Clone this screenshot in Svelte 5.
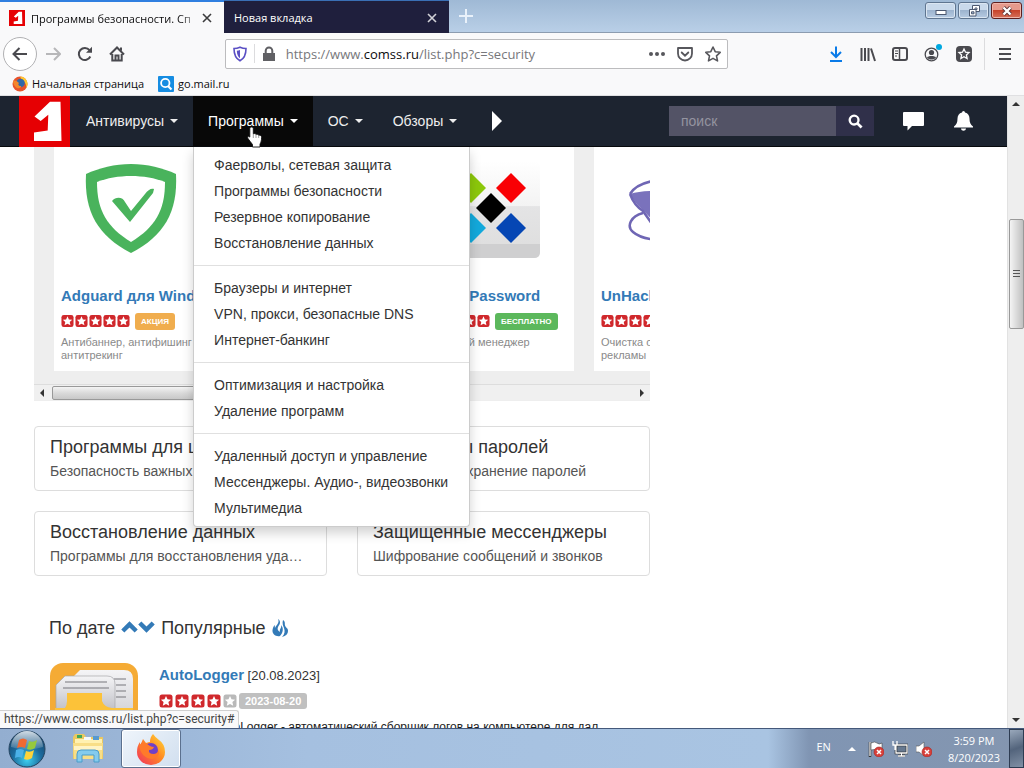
<script>
  const nav = ['Антивирусы', 'Программы', 'ОС', 'Обзоры'];
  const menu = [
    ['Фаерволы, сетевая защита', 'Программы безопасности', 'Резервное копирование', 'Восстановление данных'],
    ['Браузеры и интернет', 'VPN, прокси, безопасные DNS', 'Интернет-банкинг'],
    ['Оптимизация и настройка', 'Удаление программ'],
    ['Удаленный доступ и управление', 'Мессенджеры. Аудио-, видеозвонки', 'Мультимедиа']
  ];
  const cards = [
    { title: 'Adguard для Wind...', badge: 'АКЦИЯ', tone: 'promo', text: 'Антибаннер, антифишинг и антитрекинг', logo: 'shield' },
    { title: '' },
    { title: 'Sticky Password', badge: 'БЕСПЛАТНО', tone: 'free', text: 'Надежный менеджер', logo: 'sticky' },
    { title: 'UnHackMe', badge: '', tone: '', text: 'Очистка от вирусов и рекламы', logo: 'unhack' }
  ];
  const groups = [
    ['Программы для школы', 'Безопасность важных данных'],
    ['Менеджеры паролей', 'Управление и хранение паролей'],
    ['Восстановление данных', 'Программы для восстановления удаленных файлов'],
    ['Защищенные мессенджеры', 'Шифрование сообщений и звонков']
  ];
</script>

{#snippet star(on)}
  <svg class="star" viewBox="0 0 14 14" aria-hidden="true">
    <rect x="0.5" y="0.5" width="13" height="13" rx="2.5" fill={on ? '#d0282c' : '#b9b9b9'} />
    <path d="M7 2l1.5 3.300 3.600.4-2.700 2.400.8 3.600L7 9.900l-3.200 1.800.8-3.600-2.700-2.400 3.600-.4z" fill="#fff" />
  </svg>
{/snippet}

{#snippet brand()}
  <svg viewBox="0 0 51 51" aria-hidden="true">
    <rect width="51" height="51" fill="#e60003" />
    <path d="M31 5.700H41.500L42.500 45H15V36.500L28.700 34.500L29.300 18.700L21.700 25L15.500 20.500Z" fill="#fff" />
  </svg>
{/snippet}

{#snippet redX()}
  <circle cx="11" cy="11" r="5" fill="#d8403a" stroke="#a62420" stroke-width=".6" />
  <path d="M9 9l4 4M13 9l-4 4" stroke="#fff" stroke-width="1.5" />
{/snippet}

<div class="desktop">
  <header class="titlebar">
    <div class="tab active">
      <span class="favicon">{@render brand()}</span>
      <span class="tabname fade">Программы безопасности. Сп</span>
      <button class="close" aria-label="Закрыть вкладку"><svg viewBox="0 0 10 10"><path d="M1 1l8 8M9 1L1 9" /></svg></button>
    </div>
    <div class="tab">
      <span class="tabname">Новая вкладка</span>
      <button class="close" aria-label="Закрыть вкладку"><svg viewBox="0 0 10 10"><path d="M1 1l8 8M9 1L1 9" /></svg></button>
    </div>
    <button class="newtab" aria-label="Новая вкладка"><svg viewBox="0 0 14 14"><path d="M7 0v14M0 7h14" stroke="#e9f1fa" stroke-width="2" /></svg></button>
    <div class="winbtns">
      <button aria-label="Свернуть"><svg viewBox="0 0 16 12"><rect x="3" y="5.500" width="10" height="4" fill="#fff" stroke="#4c5870" /></svg></button>
      <button aria-label="Восстановить"><svg viewBox="0 0 16 12"><path d="M6.500 .5h7v6h-7zM9 3h2v1.500H9z" fill="#fff" stroke="#4c5870" /><path d="M3.500 4.500h6.500v6.500H3.500z" fill="#fff" stroke="#4c5870" /><path d="M5.500 6.800h2.500v2H5.500z" fill="#a9bdd4" stroke="#4c5870" /></svg></button>
      <button class="quit" aria-label="Закрыть"><svg viewBox="0 0 16 12"><path d="M4.500 2.500l7 7M11.500 2.500l-7 7" stroke="#5c3436" stroke-width="4" /><path d="M4.500 2.500l7 7M11.500 2.500l-7 7" stroke="#fff" stroke-width="2.400" /></svg></button>
    </div>
  </header>

  <div class="toolbar">
    <button class="back" aria-label="Назад"><svg viewBox="0 0 16 16"><path d="M15 8H2M7.500 2L1.500 8l6 6" /></svg></button>
    <button class="tool dim" aria-label="Вперёд"><svg viewBox="0 0 16 16"><path d="M1 8h13M9 2l6 6-6 6" /></svg></button>
    <button class="tool" aria-label="Обновить"><svg viewBox="0 0 16 16"><path d="M13.300 10.500A6 6 0 1 1 12.500 4.200" /><path d="M15 .8v6H9z" fill="#4a4a4f" stroke="none" /></svg></button>
    <button class="tool" aria-label="Домой"><svg viewBox="0 0 16 16"><path d="M1 8.500L8 1.500l7 7M3.300 8v6.500h9.400V8M12 1.500v3" /><path d="M6.500 14.500V9.500h3v5" /></svg></button>
    <span class="spring"></span>
    <div class="urlbar">
      <svg class="ic" viewBox="0 0 16 16"><path d="M8 1.200c2 .9 4 1.300 6 1.300 0 6-1.300 9.800-6 12.300C3.300 12.300 2 8.500 2 2.500c2 0 4-.4 6-1.300z" fill="none" stroke="#5a4fc4" stroke-width="1.600" /><path d="M8 4v8.300C6 10.800 4.900 8.500 4.800 4.800 6 4.700 7 4.500 8 4z" fill="#5a4fc4" /></svg>
      <span class="bar"></span>
      <svg class="ic" viewBox="0 0 16 16"><path d="M2 7h12v8H2z" fill="#606064" /><path d="M4.700 7V4.700a3.300 3.300 0 0 1 6.600 0V7" fill="none" stroke="#606064" stroke-width="2" /></svg>
      <span class="address">https://www.<b>comss.ru</b>/list.php?c=security</span>
      <span class="actions">
        <svg class="ic" viewBox="0 0 16 16" fill="#57575c"><circle cx="2" cy="8" r="2" /><circle cx="8" cy="8" r="2" /><circle cx="14" cy="8" r="2" /></svg>
        <svg class="ic" viewBox="0 0 16 16" fill="none" stroke="#57575c" stroke-width="1.800" stroke-linecap="round"><path d="M1 2h14v5.500a7 7 0 0 1-14 0z" stroke-linejoin="round" /><path d="M4.700 6.500L8 9.700l3.300-3.200" /></svg>
        <svg class="ic" viewBox="0 0 16 16" fill="none" stroke="#57575c" stroke-width="1.600" stroke-linejoin="round"><path d="M8 1l2.200 4.700 5 .6-3.700 3.500 1 5.100L8 12.400 3.500 14.900l1-5.100L.8 6.300l5-.6z" /></svg>
      </span>
    </div>
    <span class="spring"></span>
    <button class="tool blue" aria-label="Загрузки"><svg viewBox="0 0 16 16"><path d="M8 .5v10M3 6l5 5 5-5M2 15h12" /></svg></button>
    <button class="tool" aria-label="Библиотека"><svg viewBox="0 0 16 16"><path d="M1.500 2v13M5 2v13M8.500 2v13M11 2.500L15 15" /></svg></button>
    <button class="tool" aria-label="Боковая панель"><svg viewBox="0 0 16 16"><rect x="1" y="2" width="14" height="12" rx="2" /><path d="M7.500 2v12" stroke-width="1.500" /><path d="M3 5h3M3 7.500h3M3 10h2" stroke-width="1" /></svg></button>
    <button class="tool" aria-label="Аккаунт"><svg class="account" viewBox="0 0 16 16"><circle cx="7.500" cy="8.500" r="6.300" stroke-width="1.300" /><circle cx="7.500" cy="6.500" r="2.600" fill="#4a4a4f" stroke="none" /><path d="M3 11.500c1-2 8-2 9 0-2 2.800-7 2.800-9 0z" fill="#4a4a4f" stroke="none" /><circle cx="15" cy="1" r="3" fill="#00a8e0" stroke="none" /></svg></button>
    <button class="tool" aria-label="Избранное"><svg viewBox="0 0 16 16"><rect width="16" height="16" rx="4" fill="#4a4a4f" stroke="none" /><path d="M8 3l1.500 3.200 3.500.4-2.600 2.400.7 3.500L8 10.800l-3.100 1.700.7-3.500L3 6.600l3.500-.4z" stroke="#fff" stroke-width="1.300" /></svg></button>
    <span class="bar tall"></span>
    <button class="tool menuicon" aria-label="Меню"><svg viewBox="0 0 16 16"><path d="M2 3h12M2 8h12M2 13h12" /></svg></button>
  </div>

  <nav class="bookmarks">
    <a href="#start">
      <svg class="ic" viewBox="0 0 16 16"><circle cx="8" cy="8" r="7.500" fill="#e8532b" /><path d="M8 .5a7.500 7.500 0 0 1 6 12c1-5-2-7-4-8z" fill="#ffc62e" /><circle cx="8.500" cy="7" r="4.300" fill="#3268a8" /><path d="M1 5c2-1 4 0 6 2-1 1-1 3 2 3 1 1-2 3-4 2-2-1-4-4-4-7z" fill="#f4862b" /></svg>
      Начальная страница
    </a>
    <a href="#mail">
      <svg class="ic" viewBox="0 0 16 16"><rect width="16" height="16" rx="1" fill="#168de2" /><circle cx="7.300" cy="7" r="4.200" fill="none" stroke="#fff" stroke-width="1.800" /><path d="M10 10l3.500 3.500" stroke="#fff" stroke-width="2.200" /></svg>
      go.mail.ru
    </a>
  </nav>

  <div class="viewport">
    <div class="page">
      <div class="navbar">
        <a class="brand" href="#home" aria-label="Comss">{@render brand()}</a>
        {#each nav as item, i}
          <div class="navitem" class:open={i === 1}>
            <button class="navbtn">{item}<span class="caret"></span></button>
            {#if i === 1}
              <div class="dropdown">
                {#each menu as group, g}
                  {#if g > 0}<hr />{/if}
                  {#each group as entry}<a href="#menu">{entry}</a>{/each}
                {/each}
              </div>
              <svg class="pointer" viewBox="0 0 16 22"><path d="M4.500 1c1.300 0 1.800.8 1.800 1.800v5c1-.5 2.300-.2 2.700.6 1-.4 2.200 0 2.600.9 1.500-.5 3 .3 3 1.900 0 3-.5 5-1.600 7V21H5.500v-2.500C4 16.500 2.500 14.800 1 12.500c-.8-1.300 0-2.300 1-2.100l.8.700V2.800C2.800 1.800 3.300 1 4.500 1z" fill="#fff" stroke="#111" stroke-width=".9" /><path d="M6.300 8v4M9 8.500V12M11.700 9.500V12" stroke="#777" stroke-width=".7" /></svg>
            {/if}
          </div>
        {/each}
        <button class="more" aria-label="Ещё"><svg viewBox="0 0 10 20"><path d="M0 0l10 10L0 20z" fill="#fff" /></svg></button>
        <form class="search">
          <input type="text" placeholder="поиск" aria-label="поиск" />
          <button type="button" aria-label="Найти"><svg viewBox="0 0 16 16"><circle cx="6.500" cy="6.500" r="4.700" fill="none" stroke="#fff" stroke-width="2.500" /><path d="M10 10l4.500 4.500" stroke="#fff" stroke-width="3" /></svg></button>
        </form>
        <button class="iconbtn" aria-label="Комментарии"><svg viewBox="0 0 21 20"><path d="M1 1h19a1 1 0 0 1 1 1v12a1 1 0 0 1-1 1H9l-4.500 4.500V15H1a1 1 0 0 1-1-1V2a1 1 0 0 1 1-1z" fill="#fff" /></svg></button>
        <button class="iconbtn" aria-label="Уведомления"><svg viewBox="0 0 21 20"><path d="M9 1.500a1.500 1.500 0 0 1 3 0c3 .7 4.500 3 4.500 6 0 4 1 6 3.500 8v1H1v-1c2.500-2 3.500-4 3.500-8 0-3 1.500-5.300 4.500-6zM8 17.500h5c-.3 3-4.700 3-5 0z" fill="#fff" /></svg></button>
      </div>

      <div class="layout">
        <main>
          <section class="carousel">
            <div class="strip">
              {#each cards as card}
                <article class="card">
                  {#if card.title}
                  <div class="logo">
                    {#if card.logo === 'shield'}
                      <svg viewBox="0 0 100 100"><path d="M50 5c16 0 32 4 45 10 2 38-12 62-45 79C17 77 3 53 5 15 18 9 34 5 50 5z" fill="#49b35c" /><path d="M50 17c12 0 24 2 34 6 0 29-10 45-34 60C26 68 16 52 16 23c10-4 22-6 34-6z" fill="#fff" /><path d="M31 42c4-5 11-4 13 1l6 9 14-17c3-4 6-6 9-5l-1 4L49 63z" fill="#49b35c" /></svg>
                    {:else if card.logo === 'sticky'}
                      <svg viewBox="0 0 100 100"><defs><linearGradient id="tile" x2="0" y2="1"><stop stop-color="#fff" /><stop offset=".46" stop-color="#f3f3f3" /><stop offset=".47" stop-color="#e4e4e5" /><stop offset="1" stop-color="#ddd" /></linearGradient></defs><rect x="1" y="2" width="98" height="97" rx="6" fill="url(#tile)" /><path d="M1 85h98v8q0 6-6 6H7q-6 0-6-6z" fill="#cfcfd0" /><path d="M30 14l15 15-15 15-15-15z" fill="#8cc80b" /><path d="M70 14l15 15-15 15-15-15z" fill="#f90004" /><path d="M50 34l15 15-15 15-15-15z" fill="#000" /><path d="M30 54l15 15-15 15-15-15z" fill="#13a9dc" /><path d="M70 54l15 15-15 15-15-15z" fill="#0546b4" /></svg>
                    {:else if card.logo === 'unhack'}
                      <svg viewBox="0 0 100 100" fill="none" stroke="#6f66b4" stroke-width="2.500"><path d="M9 35q10-3 25-3h36L40 70 22 51Q13 43 9 35z" fill="#7a72bc" stroke="none" /><path d="M9 35Q15 25 32 22M9 35Q13 46 22 52L36 72M22 54C10 57 5 67 12 73q8 7 26 8" /></svg>
                    {/if}
                  </div>
                  <a class="title" href="#card">{card.title}</a>
                  <div class="rating">
                    {#each [1, 2, 3, 4, 5] as n}{@render star(n > 0)}{/each}
                    {#if card.badge}<span class="badge {card.tone}">{card.badge}</span>{/if}
                  </div>
                  <p>{card.text}</p>
                  {/if}
                </article>
              {/each}
            </div>
            <div class="hscroll"><span class="arrow left"></span><span class="thumb"></span><span class="arrow right"></span></div>
          </section>

          <section class="groups">
            {#each groups as group}
              <a class="group" href="#group"><strong>{group[0]}</strong><span>{group[1]}</span></a>
            {/each}
          </section>

          <div class="sort">
            По дате
            <svg class="chev" viewBox="0 0 34 18"><path d="M1.800 12L8.500 5.500l6.700 6.500M18.800 4l6.700 6.500L32.200 4" fill="none" stroke="#337ab7" stroke-width="4.500" /></svg>
            Популярные
            <svg class="fire" viewBox="0 0 16 18"><path d="M6 0c4 3 1 6 0 8s0 4 2 5c-1-3 2-4 1-7 3 3 2 8-1 11-4 1-8-2-7.500-6C1 8 2 7 2.500 6c.5 1 .3 2 .5 3C4 6 8 4 6 0z" fill="#337ab7" /><path d="M11 1c3 2 1 4 2.500 6.500S16 9 16 12c0 3-2 5-6 6 3-3 3-6 2-9-1-2-2-5-1-8z" fill="#337ab7" /></svg>
          </div>

          <article class="entry">
            <svg class="folder" viewBox="0 0 88 88"><defs><linearGradient id="paper" x2="0" y2="1"><stop stop-color="#f4f4f6" /><stop offset="1" stop-color="#c2c2c8" /></linearGradient></defs><rect width="88" height="88" rx="13" fill="#f5ab35" /><path d="M24 13l6-6h44q9 0 9 9v58H40z" fill="url(#paper)" /><path d="M64 16h12M66 22h10M66 28h10M66 34h10" stroke="#77777d" stroke-width="1.200" /><path d="M6 22l9-9h42q8 0 8 8v25H6z" fill="url(#paper)" stroke="#a6a6ab" stroke-width=".7" /><path d="M15 19h42M13 25h46" stroke="#77777d" stroke-width="1.200" /><path d="M17 30h35v8q2 6 10 7h21v36H5V45h10q2-3 2-7z" fill="#fcc239" /></svg>
            <div class="info">
              <div class="name"><a href="#autologger">AutoLogger</a> [20.08.2023]</div>
              <div class="rating wide">
                {#each [1, 1, 1, 1, 0] as n}{@render star(n)}{/each}
                <span class="badge date">2023-08-20</span>
              </div>
              <p>Средство AutoLogger - автоматический сборщик логов на компьютере для дал</p>
            </div>
          </article>
        </main>
      </div>
    </div>
    <div class="vscroll"><span class="arrow up"></span><span class="thumb"><i></i></span><span class="arrow down"></span></div>
    <div class="status">https://www.comss.ru/list.php?c=security#</div>
  </div>

  <footer class="taskbar">
    <button class="orb" aria-label="Пуск"><svg viewBox="0 0 38 38"><defs><radialGradient id="orb" cx=".5" cy=".8" r=".8"><stop stop-color="#3dd0f0" /><stop offset=".5" stop-color="#1c6b9d" /><stop offset="1" stop-color="#173f63" /></radialGradient><linearGradient id="gloss" x2="0" y2="1"><stop stop-color="#e4eef6" stop-opacity=".9" /><stop offset="1" stop-color="#fff" stop-opacity=".1" /></linearGradient></defs><circle cx="19" cy="19" r="18" fill="url(#orb)" stroke="#25445f" /><path d="M3 17a16 16 0 0 1 32 0q-16 5-32 0z" fill="url(#gloss)" /><path d="M11 10q4-3 8 0l-2 8q-4-2-8 0z" fill="#ef6932" /><path d="M21 11q4 2 8-1l-2 8q-4 3-8 1z" fill="#95c93d" /><path d="M8 20q4-2 8 0l-2 8q-3-2-7 0z" fill="#4bb1e8" /><path d="M18 21q4 2 8-1l-2 8q-4 3-8 1z" fill="#fed33a" /></svg></button>
    <button class="task" aria-label="Проводник"><svg viewBox="0 0 34 32"><path d="M2 4l2-3h9l2 3h17v22H2z" fill="#eac862" /><path d="M4 6h27v19H4z" fill="#fff1b1" /><path d="M6 2h5v3H6z" fill="#41a85a" /><path d="M13 4h7v3h-7z" fill="#f7fafb" /><path d="M22 3h6v4h-6z" fill="#5799d0" /><path d="M2 10h30l-1 16H3z" fill="#f8de87" /><path d="M3 15h28" stroke="#fff4c5" stroke-width="4" /><path d="M6 29V21q0-4 4-4h14q4 0 4 4v8h-5v-7H11v7z" fill="#84cbed" stroke="#4b9cc9" /></svg></button>
    <button class="task current" aria-label="Firefox"><svg viewBox="0 0 34 32"><defs><linearGradient id="fox" x1="1" x2="0" y2="1"><stop stop-color="#ffe13b" /><stop offset=".45" stop-color="#ff8a22" /><stop offset="1" stop-color="#f12e61" /></linearGradient></defs><path d="M19 1q2 3 6 6 6 4 6 12a14 13 0 0 1-28 0q0-6 3-10v3q2-3 3-6l3 4q3-1 4-1 0-5 3-8z" fill="url(#fox)" /><circle cx="17" cy="17" r="7" fill="#7040c6" /><path d="M5 12q6-4 11 1 2 1 4 1-1 3-5 3-1 4 5 4 4-1 5-4 1 8-7 9Q7 25 5 12z" fill="#ff7a2a" /></svg></button>
    <div class="tray">
      <span class="lang">EN</span>
      <span class="trayup"></span>
      <svg class="ic" viewBox="0 0 16 16"><path d="M2 1v15" stroke="#333" stroke-width="2.500" /><path d="M2 1v14" stroke="#fff" stroke-width="1.200" /><path d="M3 2q4-2 6 0t5 0v7q-3 1-5 0t-6 0z" fill="#fff" stroke="#444" stroke-width=".6" />{@render redX()}</svg>
      <svg class="ic" viewBox="0 0 16 16"><path d="M4 4h11v8H4zM9.500 12v3M6 15h7" fill="#66788f" stroke="#222" stroke-width="2.500" /><path d="M4 4h11v8H4zM9.500 12v3M6 15h7M1 0v4h4V0M3 4v5" fill="none" stroke="#fff" stroke-width="1.300" /></svg>
      <svg class="ic" viewBox="0 0 16 16"><path d="M0 5h3l5-4v14l-5-4H0z" fill="#fff" stroke="#555" stroke-width=".6" />{@render redX()}</svg>
      <div class="clock"><span>3:59 PM</span><span>8/20/2023</span></div>
    </div>
    <button class="peek" aria-label="Рабочий стол"></button>
  </footer>
</div>

<style>
  :global(body) { margin: 0; }
  .desktop { display: flex; flex-direction: column; height: 100vh; overflow: hidden; background: #fff; color: #333; font-family: "Liberation Sans", Arial, sans-serif; font-size: 14px; }
  .desktop * { box-sizing: border-box; }
  button { border: 0; padding: 0; margin: 0; background: none; font: inherit; color: inherit; display: flex; align-items: center; justify-content: center; }
  a { color: inherit; text-decoration: none; }
  p { margin: 0; }
  svg { display: block; flex: none; }
  .ic { width: 16px; height: 16px; }

  .titlebar, .toolbar, .bookmarks, .status, .taskbar { font-family: "Open Sans", "Noto Sans", sans-serif; font-size: 11px; }

  .titlebar { flex: none; display: flex; height: 33px; background: linear-gradient(#9fb9d5, #b9cfe7); border-bottom: 1px solid #8c9cb0; }
  .tab { display: flex; align-items: center; gap: 7px; width: 225px; height: 33px; padding: 1px 12px 0 10px; background: #1f1f3d; color: #fff; border-top: 1px solid #3a6fb5; }
  .tab.active { width: 224px; padding-left: 9px; background: #f9f9fa; color: #0c0c0d; border-top: 2px solid #2f7fe0; gap: 6px; }
  .favicon svg { width: 16px; height: 16px; }
  .tabname { flex: 1; min-width: 0; overflow: hidden; white-space: nowrap; }
  .fade { mask-image: linear-gradient(to right, #000 90%, transparent 104%); }
  .close svg { width: 10px; height: 10px; stroke: currentColor; stroke-width: 1.6; }
  .close { opacity: .8; }
  .newtab { width: 34px; }
  .newtab svg { width: 14px; height: 14px; }
  .winbtns { margin-left: auto; display: flex; gap: 2px; padding: 2px 2px 0 0; }
  .winbtns button { width: 31px; height: 17px; border: 1px solid #5f7590; border-radius: 3px; background: linear-gradient(#c9d9eb 45%, #9db4cf 50%, #b7cbe2); box-shadow: inset 0 0 0 1px #dbe6f2; }
  .winbtns .quit { border-color: #5e1f1e; background: linear-gradient(#e69a8c 45%, #c7432b 50%, #d6705a); box-shadow: inset 0 0 0 1px #efb5aa; }
  .winbtns svg { width: 16px; height: 12px; }

  .toolbar { flex: none; display: flex; align-items: center; height: 41px; padding: 0 3px; background: #f9f9fa; }
  .tool, .back { width: 32px; height: 32px; color: #4a4a4f; flex: none; }
  .back { width: 34px; height: 34px; border: 1px solid #b1b1b3; border-radius: 50%; background: #fff; }
  .tool svg, .back svg { width: 16px; height: 16px; fill: none; stroke: currentColor; stroke-width: 2; }
  .account { overflow: visible; }
  .dim { color: #b7b7b9; }
  .blue { color: #0a7be8; }
  .spring { flex: 3; }
  .urlbar { flex: 16 1 0; display: flex; align-items: center; height: 30px; padding: 0 6px; gap: 6px; background: #fff; border: 1px solid #bcbcbe; border-radius: 2px; }
  .bar { width: 1px; height: 19px; background: #dcdcde; }
  .bar.tall { height: 32px; margin: 0 4px; }
  .address { flex: 1; padding-left: 3px; font-size: 13px; color: #77777b; white-space: nowrap; }
  .address b { color: #0c0c0d; font-weight: 400; }
  .actions { display: flex; gap: 12px; }

  .bookmarks { flex: none; display: flex; gap: 14px; height: 22px; padding: 0 12px; background: #f9f9fa; border-bottom: 1px solid #e0e0e2; color: #0c0c0d; line-height: 18px; }
  .bookmarks a { display: flex; align-items: center; gap: 4px; height: 19px; }

  .viewport { position: relative; flex: 1; min-height: 0; display: flex; overflow: hidden; }
  .page { flex: 1; min-width: 0; }
  .navbar { position: relative; z-index: 2; display: flex; align-items: center; height: 51px; padding: 0 24px 0 19px; background: #1d2430; border-bottom: 1px solid #080a0d; color: #eee; }
  .brand { margin-right: 1px; }
  .brand svg { width: 51px; height: 51px; }
  .navitem { position: relative; height: 50px; }
  .navbtn { height: 50px; padding: 0 15px; gap: 5px; }
  .open .navbtn { background: #080808; color: #fff; }
  .caret { border: 4px solid transparent; border-top-color: currentColor; border-bottom: 0; margin-left: 1px; }
  .dropdown { position: absolute; top: 51px; left: 0; min-width: 277px; padding: 5px 0; background: #fff; color: #333; border: 1px solid #ccc; border-top: 0; border-radius: 0 0 4px 4px; box-shadow: 0 6px 12px rgba(0, 0, 0, .18); }
  .dropdown a { display: block; padding: 0 20px; line-height: 26px; white-space: nowrap; }
  .dropdown hr { height: 1px; margin: 9px 0; border: 0; background: #e0e0e0; }
  .pointer { position: absolute; left: 54px; top: 30px; width: 16px; height: 22px; }
  .more { padding: 0 20px; }
  .more svg { width: 10px; height: 20px; }
  .search { display: flex; margin: 0 19px 0 auto; }
  .search input { width: 167px; height: 30px; padding: 0 12px; border: 0; border-radius: 0; background: #535366; color: #fff; font: inherit; }
  .search input::placeholder { color: #9494a0; opacity: 1; }
  .search button { width: 38px; height: 30px; background: #30304a; }
  .search svg { width: 15px; height: 15px; }
  .iconbtn { width: 40px; height: 30px; }
  .iconbtn + .iconbtn { margin-left: 10px; }
  .iconbtn svg { width: 21px; height: 20px; }

  .layout { display: grid; grid-template-columns: minmax(0, 616fr) 357fr; padding-left: 34px; }
  .carousel { background: #eee; overflow: hidden; }
  .strip { display: flex; gap: 20px; padding: 0 20px; height: 224px; }
  .card { flex: none; width: 160px; padding: 12px 7px 0; background: #fff; }
  .logo { width: 140px; height: 125px; display: flex; justify-content: center; }
  .logo svg { width: 100px; height: 100px; }
  .title { display: block; font-size: 15px; line-height: 24px; font-weight: 700; color: #337ab7; white-space: nowrap; }
  .rating { display: flex; align-items: center; gap: 1px; height: 26px; }
  .star { width: 14px; height: 14px; flex: none; }
  .card .star { width: 13px; }
  .badge { margin-left: 4px; padding: 0 6px; border-radius: 3px; line-height: 17px; font-size: 8px; font-weight: 700; color: #fff; }
  .promo { background: #f0ad4e; }
  .free { background: #5cb85c; }
  .date { background: #c0c0c0; font-size: 11px; line-height: 16px; margin-left: 0; }
  .card p { font-size: 11px; line-height: 13px; padding-top: 2px; color: #8a8a8a; }
  .hscroll { display: flex; align-items: center; height: 16px; margin: 13px 0 1px; padding: 0 6px; gap: 7px; border-top: 1px solid #ddd; background: #f0f0f0; }
  .hscroll .thumb { width: 270px; height: 14px; border: 1px solid #999; border-radius: 2px; background: linear-gradient(#f4f4f4, #dadada 50%, #c8c8c8); }
  .arrow { width: 0; height: 0; border: 4px solid transparent; flex: none; }
  .arrow.left { border-right-color: #333; border-left: 0; margin-right: 1px; }
  .arrow.right { border-left-color: #333; border-right: 0; margin-left: auto; }

  .groups { display: grid; grid-template-columns: 1fr 1fr; gap: 20px 30px; margin-top: 25px; }
  .group { display: block; min-width: 0; height: 65px; padding: 8px 20px 8px 15px; border: 1px solid #ddd; border-radius: 4px; background: #fff; }
  .group strong, .group span { display: block; font-weight: 400; line-height: 24px; white-space: nowrap; overflow: hidden; text-overflow: ellipsis; }
  .group strong { font-size: 18px; }
  .group span { color: #555; }
  .sort { display: flex; align-items: center; gap: 6px; margin: 40px 15px 0; height: 24px; font-size: 18px; }
  .chev { width: 34px; height: 18px; }
  .fire { width: 16px; height: 18px; }
  .entry { display: flex; gap: 21px; margin: 23px 16px 0; }
  .folder { width: 88px; height: 88px; }
  .name { line-height: 24px; font-size: 13px; }
  .name a { font-size: 15px; font-weight: 700; color: #337ab7; }
  .rating.wide { gap: 2px; }
  .info p { padding-top: 4px; font-size: 12px; line-height: 18px; white-space: nowrap; color: #222; }

  .vscroll { flex: none; display: flex; flex-direction: column; align-items: center; width: 17px; padding: 6px 0; background: #eee; border-left: 1px solid #e2e2e2; }
  .vscroll .thumb { width: 15px; height: 110px; margin-top: 113px; border: 1px solid #999; border-radius: 2px; background: linear-gradient(to right, #f4f4f4, #dadada 50%, #c0c0c0); display: flex; align-items: center; justify-content: center; }
  .thumb i { width: 7px; height: 8px; background: repeating-linear-gradient(#555 0 1px, transparent 1px 3px); }
  .arrow.up { border-bottom-color: #333; border-top: 0; }
  .arrow.down { border-top-color: #333; border-bottom: 0; margin-top: auto; }
  .status { position: absolute; z-index: 3; left: 0; bottom: 0; height: 18px; padding: 0 4px; border: 1px solid #d0d0d0; border-width: 1px 1px 0 0; border-radius: 0 3px 0 0; background: #f9f9fa; color: #444; font-family: Roboto, sans-serif; font-size: 12px; line-height: 17px; white-space: nowrap; }

  .taskbar { flex: none; display: flex; align-items: center; height: 40px; border-top: 1px solid #44587a; background: linear-gradient(to right, #93aed0, #a5c0e0 30%, #a9c4e2 75%, #8095b3 79%, #8496b0); }
  .orb { width: 54px; }
  .orb svg { width: 38px; height: 38px; }
  .task { width: 60px; height: 39px; margin-left: 4px; }
  .task.current { margin-left: 3px; border: 1px solid #5b708e; border-radius: 3px; background: linear-gradient(135deg, #eff5fb, #d1dfef); box-shadow: inset 0 0 0 1px #fff; }
  .task svg { width: 34px; height: 32px; }
  .tray { margin-left: auto; display: flex; align-items: center; gap: 8px; padding-right: 9px; color: #fff; }
  .lang { margin-right: 9px; line-height: 16px; padding-bottom: 4px; }
  .trayup { border: 4px solid transparent; border-bottom-color: #fff; border-top: 0; margin-right: 4px; }
  .clock { display: flex; flex-direction: column; align-items: center; line-height: 17px; margin-left: 8px; }
  .peek { width: 15px; height: 39px; border: 1px solid #2d3c52; background: linear-gradient(160deg, #99a8bb, #53647c 50%, #8190a5); }
</style>
